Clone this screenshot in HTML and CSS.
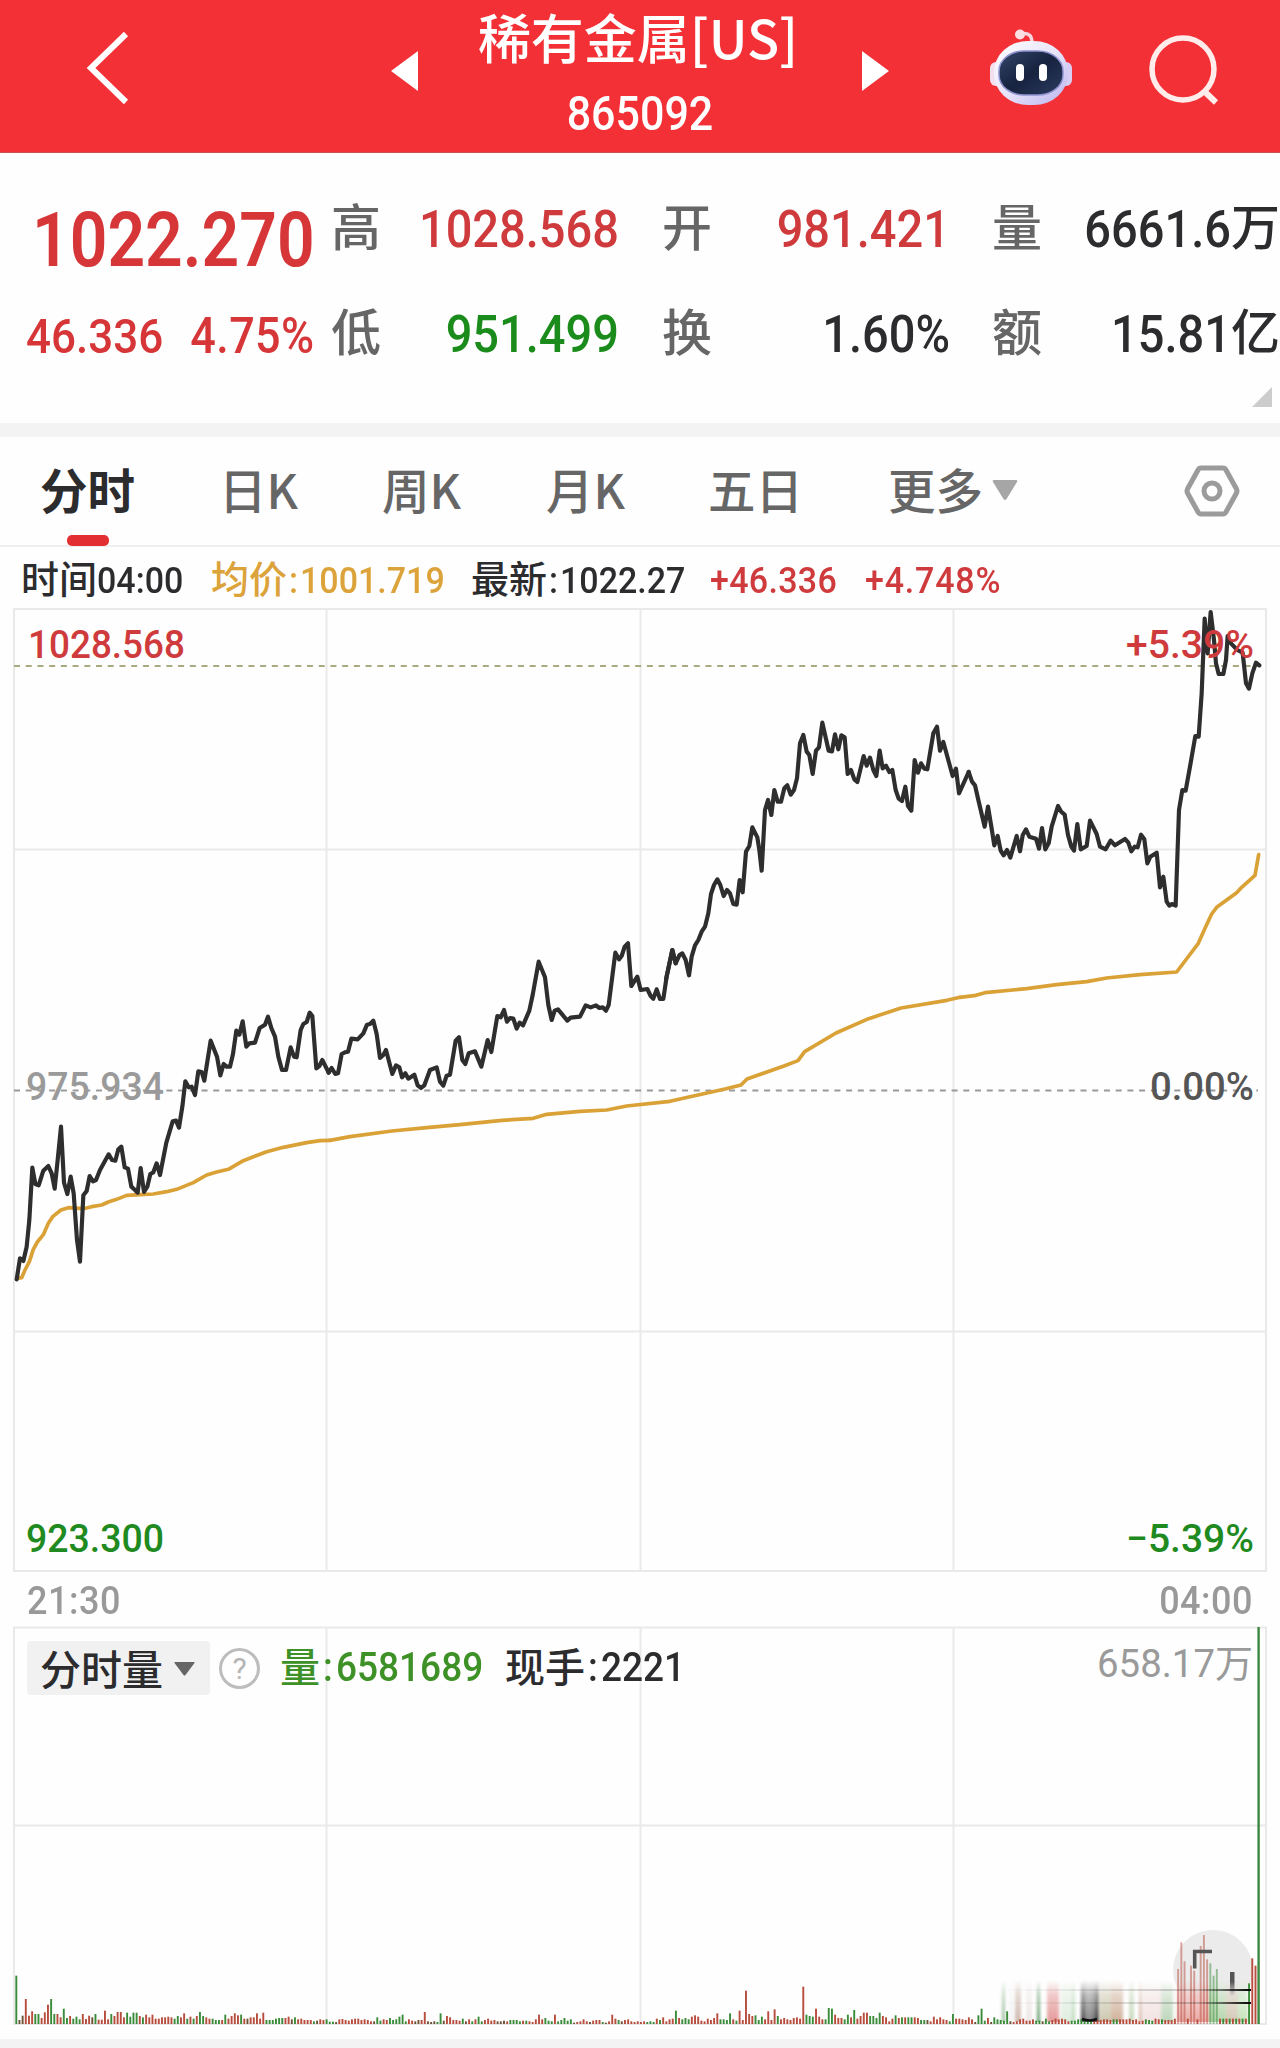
FILE: index.html
```html
<!DOCTYPE html>
<html lang="zh-CN">
<head>
<meta charset="utf-8">
<title>稀有金属[US] 865092</title>
<link rel="stylesheet" href="styles.css">
</head>
<body>
<header class="topbar">
  <svg class="back" viewBox="0 0 46 78"><path d="M41 5 6 39l35 34" fill="none" stroke="#fff" stroke-width="6"/></svg>
  <svg class="tri tri-left" viewBox="0 0 27 40"><path d="M27 0v40L0 20z" fill="#fff"/></svg>
  <div class="heading">
    <h1 class="name">稀有金属[US]</h1>
    <div class="code num">865092</div>
  </div>
  <svg class="tri tri-right" viewBox="0 0 27 40"><path d="M0 0v40L27 20z" fill="#fff"/></svg>
  <svg class="robot" viewBox="0 0 84 78">
    <defs>
      <linearGradient id="shell" x1="0" y1="0" x2="1" y2="1"><stop offset="0" stop-color="#fff"/><stop offset=".5" stop-color="#e8e4fa"/><stop offset="1" stop-color="#b9b4ee"/></linearGradient>
      <linearGradient id="face" x1="0" y1="0" x2="1" y2="1"><stop offset="0" stop-color="#34466b"/><stop offset=".5" stop-color="#17233f"/><stop offset="1" stop-color="#2b3b60"/></linearGradient>
    </defs>
    <path d="M31 5c9-2 12 2 12 9" fill="none" stroke="#f7d5dc" stroke-width="3.5"/>
    <circle cx="31" cy="5.500" r="5" fill="#fbdfe3"/>
    <rect x="1" y="33" width="14" height="24" rx="6" fill="#f3dfee"/>
    <rect x="69" y="33" width="14" height="24" rx="6" fill="#d8cdf2"/>
    <rect x="5" y="12" width="74" height="64" rx="34" ry="31" fill="url(#shell)"/>
    <rect x="10" y="22" width="64" height="44" rx="25" ry="20" fill="url(#face)" stroke="#8f93cf" stroke-width="1.500"/>
    <rect x="27" y="35" width="8" height="17" rx="4" fill="#fff"/>
    <rect x="50" y="35" width="8" height="17" rx="4" fill="#fff"/>
  </svg>
  <svg class="search" viewBox="0 0 72 72"><circle cx="34" cy="35" r="31" fill="none" stroke="#ffeceb" stroke-width="5.500"/><path d="M55 57l12 11.500" stroke="#ffeceb" stroke-width="6"/></svg>
</header>

<section class="quote">
  <div class="last">
    <div class="price num">1022.270</div>
    <div class="change"><span class="num">46.336</span><span class="num pct">4.75%</span></div>
  </div>
  <dl class="stats">
    <dt>高</dt><dd class="up"><span class="num">1028.568</span></dd>
    <dt>开</dt><dd class="up"><span class="num">981.421</span></dd>
    <dt>量</dt><dd><span class="num">6661.6</span><span class="unit">万</span></dd>
    <dt>低</dt><dd class="down"><span class="num">951.499</span></dd>
    <dt>换</dt><dd><span class="num">1.60%</span></dd>
    <dt>额</dt><dd><span class="num">15.81</span><span class="unit">亿</span></dd>
  </dl>
  <i class="corner"></i>
</section>

<nav class="tabs">
  <a class="tab active">分时</a>
  <a class="tab">日K</a>
  <a class="tab">周K</a>
  <a class="tab">月K</a>
  <a class="tab">五日</a>
  <a class="tab more">更多<svg viewBox="0 0 26 22"><path d="M2 1h22q2 0 1 2L14.500 20q-1.500 2-3 0L1 3Q0 1 2 1z" fill="#a6a6a6"/></svg></a>
  <svg class="settings" viewBox="0 0 56 54"><path d="M17 4h22q2 0 3 2l10.500 19q1 2 0 4L42 48q-1 2-3 2H17q-2 0-3-2L3.500 29q-1-2 0-4L14 6q1-2 3-2z" fill="none" stroke="#9b9b9b" stroke-width="5"/><circle cx="28" cy="27" r="8" fill="none" stroke="#9b9b9b" stroke-width="5"/></svg>
</nav>

<div class="info">
  <div class="item t">时间<span class="num">04:00</span></div>
  <div class="item avg">均价<span class="num"><i>:</i>1001.719</span></div>
  <div class="item">最新<span class="num"><i>:</i>1022.27</span></div>
  <div class="item up"><span class="num">+46.336</span></div>
  <div class="item up"><span class="num">+4.748%</span></div>
</div>

<svg class="chart" viewBox="0 606 1280 968" height="968">
  <g class="grid">
    <path d="M14 609H1266V1571H14zM326.500 609V1571M640.500 609V1571M953.500 609V1571M14 849.500H1266M14 1331.500H1266"/>
  </g>
  <path d="M14 666H1258" class="dash last-line"/>
  <path d="M14 1090.500H1258" class="dash mid-line"/>
  <g class="labels">
    <text x="26" y="1100" textLength="138" class="grey" lengthAdjust="spacingAndGlyphs">975.934</text>
    <text x="1150" y="1100" textLength="104" class="mid" lengthAdjust="spacingAndGlyphs">0.00%</text>
  </g>
  <g class="average">
    <path transform="translate(0 960) scale(.33333)" d="M50 955 65 953 75 930 88 905 100 868 112 846 130 824 145 790 158 770 183 750 205 743 250 746 275 740 305 735 325 726 350 718 380 706 420 704 460 702 500 695 530 688 580 668 620 645 650 636 685 628 730 602 800 575 850 562 920 548 960 542 990 541"/>
    <path transform="scale(.33333)" d="M990 3421 1050 3410 1176 3393 1280 3383 1380 3374 1506 3361 1600 3355 1640 3343 1740 3334 1820 3330 1880 3318 2010 3304 2040 3297 2175 3267 2223 3255 2241 3237 2352 3198 2394 3182 2414 3155 2508 3099 2606 3056 2703 3024 2841 3001 2880 2992"/>
    <path transform="translate(960 600) scale(.33333)" d="M0 1192 48 1186 75 1178 200 1166 290 1154 380 1145 440 1134 540 1124 650 1116 675 1083 715 1030 735 985 755 942 770 922 800 900 830 878 845 862 885 826 896 764"/>
  </g>
  <g class="price-line">
    <path transform="translate(0 960) scale(.33333)" d="M50 958 60 895 70 903 80 860 88 780 97 623 106 672 116 676 130 632 145 618 155 640 164 686 173 600 183 500 192 668 202 702 212 650 221 700 231 840 240 905 250 706 260 693 269 648 279 664 288 660 300 630 326 583 336 600 346 602 355 568 364 560 374 622 384 626 394 680 405 690 413 698 422 624 432 696 442 680 451 642 460 637 470 610 480 645 499 548 518 484 528 482 537 503 547 440 556 364 566 382 575 380 585 405 595 334 605 336 613 362 632 242 651 290 661 346 671 312 680 320 690 320 699 282 709 212 718 224 728 184 739 260 748 250 765 248 779 204 795 194 804 170 814 204 825 230 835 290 846 330 858 330 872 262 882 290 890 292 902 210 910 192 920 186 929 158 937 168 949 325 958 318 967 300 986 338"/>
    <path transform="translate(320 900) scale(.33333)" d="M26 518 35 504 46 522 54 520 65 462 75 457 84 455 94 416 113 418 130 400 141 374 150 372 160 362 170 402 180 474 190 465 198 450 217 522 228 496 238 502 246 532 256 520 265 536 283 524 293 556 303 564 313 556 330 510 350 502 360 545 370 557 380 527 390 524 407 422 417 412 427 480 436 492 446 460 465 454 484 500 503 420 514 456 532 348 542 352 552 330 561 365 570 354 580 356 590 386 599 368 609 376 628 332 638 285 656 185 675 232 685 315 695 360 704 332 714 328 742 362 752 353 780 350 797 316 812 322 828 316 838 324 848 322 858 332 866 315 886 158 897 178 905 168 914 140 924 130 934 258 952 230 962 270 982 267 992 288 1000 296 1010 268 1020 297 1030 297 1040 230 1057 150 1067 190"/>
    <path transform="translate(640 700) scale(.33333)" d="M78 838 97 750 107 790 118 766 127 760 137 780 147 826 155 770 165 736 175 720 185 695 195 680 205 640 213 582 222 555 232 538 241 555 251 588 261 570 270 580 280 612 290 614 299 540 308 577 318 455 328 438 337 382 352 412 358 450 365 512 375 330 384 300 394 345 403 270 413 305 423 305 433 265 442 256 452 284 462 270 471 235 480 130 490 105 500 155 508 165 518 222 528 152 537 142 547 68 566 152 576 154 585 103 595 148 604 106 614 112 623 222 633 210 643 238 652 246 671 168 680 197 690 173 700 210 709 228 719 152 728 205 738 197 748 216 757 210 767 270 776 296 786 303 796 260 804 318 814 332 824 180 834 218 843 190 853 206 862 208 880 100 891 80 900 152 910 126 938 228 948 206 957 280 986 216"/>
    <path transform="translate(960 600) scale(.33333)" d="M26 516 36 545 45 556 55 600 74 680 84 620 94 680 103 736 113 708 122 752 131 766 141 750 151 773 170 708 180 754 188 706 198 688 208 710 228 716 237 746 246 684 256 748 266 730 275 680 294 618 304 636 314 644 324 705 334 740 342 752 352 672 362 748 380 738 390 662 410 702 420 740 437 748 452 722 465 736 495 717 505 728 514 754 524 740 533 742 543 704 553 718 562 790 571 770 590 758 600 862 610 830 620 905 628 917 636 912 647 917 657 630 667 570 677 572 690 500 706 408 716 410 725 280 734 56 743 160 752 36 762 120 768 190 776 222 790 222 798 180 803 108 813 130 832 150 848 158 858 250 867 266 877 220 888 188 898 196"/>
  </g>
  <g class="labels">
    <text x="28" y="657.500" textLength="157" class="red" lengthAdjust="spacingAndGlyphs">1028.568</text>
    <text x="1126" y="657.500" textLength="128" class="red" lengthAdjust="spacingAndGlyphs">+5.39%</text>
    <text x="26" y="1552" textLength="138" class="green" lengthAdjust="spacingAndGlyphs">923.300</text>
    <text x="1126" y="1552" textLength="128" class="green" lengthAdjust="spacingAndGlyphs">−5.39%</text>
  </g>
</svg>

<div class="axis"><span class="num">21:30</span><span class="num">04:00</span></div>

<section class="volume">
  <svg class="chart" viewBox="0 1624 1280 415" height="415">
    <defs>
      <linearGradient id="down" x1="0" y1="0" x2="0" y2="1"><stop offset="0" stop-color="#fff" stop-opacity="0"/><stop offset=".35" stop-color="#fff" stop-opacity=".5"/><stop offset="1" stop-color="#fff" stop-opacity="1"/></linearGradient>
      <linearGradient id="across"><stop offset="0" stop-color="#000" stop-opacity="0"/><stop offset=".8" stop-color="#000" stop-opacity=".2"/><stop offset="1" stop-color="#000"/></linearGradient>
      <linearGradient id="barrel"><stop offset="0" stop-color="#222"/><stop offset=".35" stop-color="#888"/><stop offset=".65" stop-color="#777"/><stop offset="1" stop-color="#111"/></linearGradient>
      <mask id="fade" maskUnits="userSpaceOnUse" x="960" y="1860" width="320" height="180"><rect x="960" y="1980" width="320" height="44" fill="url(#down)"/></mask>
      <filter id="soft"><feGaussianBlur stdDeviation="1.500 0"/></filter>
      <linearGradient id="tail" x1="0" y1="0" x2="0" y2="1"><stop offset=".4" stop-color="#555"/><stop offset="1" stop-color="#555" stop-opacity="0"/></linearGradient>
      <linearGradient id="disc" gradientUnits="userSpaceOnUse" x1="0" y1="1980" x2="0" y2="2006"><stop offset="0" stop-color="#ebebeb"/><stop offset="1" stop-color="#ebebeb" stop-opacity="0"/></linearGradient>
    </defs>
    <g class="grid"><path d="M14 1627.500H1266V2024H14zM326.500 1627V2024M640.500 1627V2024M953.500 1627V2024M14 1825.500H1266"/></g>
    <circle cx="1213" cy="1970" r="40" fill="url(#disc)"/>
    <g mask="url(#fade)"><g id="streaks" filter="url(#soft)"></g></g>
    <g id="bars"></g>
    <path d="M1194.700 1968.500V1951.500H1212" fill="none" stroke="#555" stroke-width="3.600"/>
    <rect x="1230" y="1972" width="4.500" height="24" fill="url(#tail)"/>
    <rect x="1000" y="1989" width="251" height="2" fill="url(#across)"/>
    <rect x="1000" y="2002" width="251" height="2" fill="url(#across)"/>
    <path d="M1082 2019q8 3 15 0" fill="none" stroke="#111" stroke-width="2.500"/>
    <g class="labels"><text x="1097" y="1677" textLength="118" class="grey thin" lengthAdjust="spacingAndGlyphs">658.17</text><text x="1215" y="1677" class="cjk">万</text></g>
  </svg>
  <div class="legend">
    <div class="picker">分时量<svg viewBox="0 0 21 14"><path d="M1 0h19q1 0 .5 1L11.500 13q-1 1-2 0L.5 1Q0 0 1 0z" fill="#666"/></svg></div>
    <span class="help">?</span>
    <div class="item vol">量<span class="num"><i>:</i>6581689</span></div>
    <div class="item">现手<span class="num"><i>:</i>2221</span></div>
  </div>
</section>
<footer class="foot"></footer>
<script src="volume.js"></script>
</body>
</html>
```
FILE: styles.css
```css
* { box-sizing: border-box; }
body {
  margin: 0;
  width: 1280px;
  height: 2048px;
  overflow: hidden;
  background: #fefefe;
  color: #2c2c2e;
  font-family: "Noto Sans CJK SC", sans-serif;
  font-weight: 500;
}
svg { display: block; }
.num {
  display: inline-block;
  font-family: Roboto, "Noto Sans CJK SC", sans-serif;
  font-weight: 500;
  transform: scaleY(1.09);
}
.up { color: #cf3a3c; }
.down { color: #1b8c1b; }

.topbar {
  display: flex;
  align-items: flex-start;
  height: 153px;
  background: #f23036;
  border-bottom: 1px solid #c9504f;
  color: #fff;
}
.back { width: 46px; height: 78px; margin: 29px 0 0 85px; }
.tri { width: 27px; height: 40px; margin-top: 51px; }
.tri-left { margin-left: 260px; }
.heading { width: 444px; text-align: center; }
.name { margin: 0; font-size: 53px; font-weight: 500; line-height: 72px; height: 74px; white-space: nowrap; margin-right: 4px; }
.code { font-size: 43px; line-height: 50px; margin-top: 14px; transform: scaleY(1.14); }
.robot { width: 84px; height: 78px; margin: 29px 0 0 100px; }
.search { width: 72px; height: 72px; margin: 34px 0 0 76px; }

.quote { position: relative; display: flex; height: 270px; }
.last { width: 332px; color: #d63638; }
.price { display: block; font-size: 66px; font-weight: 600; line-height: 80px; margin: 48px 0 0 32px; transform: scaleY(1.14); }
.change { display: flex; gap: 27px; font-size: 44px; line-height: 50px; margin: 31px 0 0 26px; }
.pct { font-size: 45px; letter-spacing: .4px; }
.stats {
  display: grid;
  grid-template-columns: 50px 237px 44px 50px 237px 43px 50px 237px;
  grid-template-rows: 60px 60px;
  row-gap: 45px;
  margin: 45px 0 0;
}
.stats dt { grid-column: 1; color: #666; font-size: 50px; line-height: 52px; margin-left: -1px; }
.stats dt:nth-of-type(3n+2) { grid-column: 4; }
.stats dt:nth-of-type(3n) { grid-column: 7; }
.stats dd { display: flex; justify-content: flex-end; margin: 0; font-size: 47px; line-height: 62px; white-space: nowrap; }
.unit { font-size: 49px; line-height: 52px; }
.corner { position: absolute; right: 8px; bottom: 16px; width: 20px; height: 20px; background: #ccc; clip-path: polygon(100% 0, 100% 100%, 0 100%); }

.tabs {
  display: flex;
  height: 124px;
  border-top: 14px solid #f3f3f3;
  border-bottom: 2px solid #efefef;
  padding-left: 40px;
}
.tab { position: relative; width: 157px; padding-top: 17px; font-size: 47.5px; line-height: 69px; color: #666; white-space: nowrap; }
.tab:nth-child(1) { width: 179px; font-weight: 700; color: #2c2c2e; }
.tab:nth-child(2) { width: 163px; }
.tab:nth-child(3) { width: 164px; }
.tab:nth-child(4) { width: 162px; }
.tab:nth-child(5) { width: 180px; }
.tab.active::after { content: ""; position: absolute; left: 27px; bottom: -1px; width: 42px; height: 11px; border-radius: 5px; background: #e22f31; }
.more { display: flex; width: 296px; }
.more svg { width: 26px; height: 22px; margin: 25px 0 0 9px; }
.settings { width: 56px; height: 54px; margin-top: 27px; }

.info { display: flex; height: 59px; padding: 5px 0 0 21px; }
.item { display: flex; font-size: 38px; line-height: 50px; white-space: nowrap; }
.item .num { font-size: 34px; line-height: 56px; }
.item i { font-style: normal; display: inline-block; width: 13px; text-align: center; }
.info .item { width: 239px; }
.info .item:nth-child(1) { width: 190px; }
.info .item:nth-child(2) { width: 260px; }
.info .item:nth-child(4) { width: 155px; }
.info .up { letter-spacing: .3px; }
.info .up:last-child { letter-spacing: .8px; }
.info .avg { color: #dba339; }

.grid path { fill: none; stroke: #e9e9e9; stroke-width: 2; }
.dash { stroke-width: 2; stroke-dasharray: 6 5.72; }
.last-line { stroke: #a9aa80; }
.mid-line { stroke: #999; }
.price-line path, .average path { fill: none; stroke-width: 12.5; stroke-linejoin: round; stroke-linecap: round; }
.price-line path { stroke: #2e2e2e; }
.average path { stroke: #d9a136; stroke-width: 11; }
.labels text { font-family: Roboto, sans-serif; font-weight: 500; font-size: 39px; }
.labels .red { fill: #cf3a3c; }
.labels .green { fill: #1f8a20; }
.labels .grey { fill: #9a9a9a; }
.labels .mid { fill: #555; }
.labels .thin { font-weight: 400; }
.labels .cjk { font-family: "Noto Sans CJK SC", sans-serif; font-weight: 400; font-size: 38px; fill: #999; }

.axis { display: flex; justify-content: space-between; height: 50px; padding: 0 27px; font-size: 36px; line-height: 55px; color: #999; }
.axis .num { letter-spacing: .5px; }

.volume { position: relative; height: 415px; }
.legend { position: absolute; left: 27px; top: 17px; display: flex; align-items: center; height: 54px; }
.picker { display: flex; align-items: center; width: 183px; height: 54px; padding: 0 0 3px 13px; border-radius: 4px; background: #f1f1f1; font-size: 41px; line-height: 50px; white-space: nowrap; }
.picker svg { width: 21px; height: 14px; margin: 4px 0 0 11px; }
.help { width: 41px; height: 41px; margin: 0 20px 0 9px; border: 3px solid #bdbdbd; border-radius: 50%; color: #b5b5b5; font: 400 30px/35px Roboto, sans-serif; text-align: center; }
.legend .item { font-size: 40px; line-height: 48px; }
.legend .item .num { font-size: 37px; line-height: 54px; }
.legend .item i { width: 16px; }
.legend .vol { width: 225px; color: #3d9126; }
.foot { height: 9px; background: #f3f3f3; }
```
FILE: volume.js
```js
// One entry per bar: height in thirds of a pixel, optional r/g tint.
// Each run holds its first and last bar centre on the time axis.
const runs = [
  [16.3, 497.6, `145g 12 25 75r 25r 38r 30g 30g 18r 35r 58r 75g 30g 30r 20r 46g 18g 24r 16g 22g 14g 30r 15r 25r 20 30g 13r 13r 40r 14r 30g 24r 36r 36r 20r 34g 22g 34g 34g 24r 20g 28r 20r 28r 16r 16r 20r 20r 22r 20r 16g 24g 20r 32r 16g 22r 16g 24r 36g 24g 20r 16r 16g 12g 12g 12r 28g 16r 24r 32r 26r 28g 16r 16 20r 20r 32r 16r 34r 12g 12g 12g 16g 18g 18g 18r 22r 14 20g 14r 16r 12r 12r 12r 8g 10 14r 12r 14g 7g 7g 6 14r 15r 12r 10r 14r 16r 16r 12r 14r 12r 8r 8 20g 10g 14r 12r 18g 12g 14g 22g 28g 8g 14r 10r 8 12 12r 36r 8 6 8 6g 32g 10 24r 20r 12r 12r 10r 16g 8 14r 8g 14r 22g 8g 12r 16r 10r 12r 8`],
  [500.8, 997.5, `8 10 8r 12g 12g 12g 8g 10r 10g 8r 6r 14r 28r 14r 18g 10g 8g 28r 8g 12g 18g 10g 14g 4 6r 8r 14r 8r 6 10r 12r 12r 6g 4 8r 28r 16r 12g 8 12r 14r 8r 6r 8r 6r 8r 6g 8g 6g 16r 12g 20r 8r 14r 16r 40g 18r 14g 18g 14g 22r 26r 22r 10r 8r 16r 12r 18r 32r 14g 14g 12g 32g 14r 10g 40r 12r 100r 30r 24r 26g 12g 22g 14r 38r 12r 44r 24g 14r 18r 14r 12r 18r 20r 16r 112r 28g 24g 22g 46r 22r 14r 14g 48g 46g 28r 18r 18r 14g 28g 20r 42g 16r 24r 34r 34r 24g 24g 18g 34g 24r 20r 8r 16r 26g 18r 20g 20r 20g 20g 20r 18r 12g 12g 12 8r 22r 14r 20r 14r 12r 8g 30g 16r 16r 14r 12r 20r 14r 6 26g 46g 10g 18r 6 20g 14g`],
  [1000.7, 1255.5, `12g 10g 38g 8 6r 8r 14r 16r 10r 10r 14r 10g 10g 8 16g 8g 12r 16r 14r 16r 14r 8r 10g 10g 14g 14g 12g 10g 8g 12r 12r 12r 14r 14r 12r 14g 14g 14r 14r 14r 16r 12r 14r 8r 10r 14g 12g 10g 16r 14r 14g 12r 12r 12r 16r 165r 245r 188r 16r 175r 160r 14r 234r 267r 194r 182g 145g 165g 16r 16g 16r 16g 16r 16g 16r 16g 16r 122g 197r 175r`]
];

const NS = "http://www.w3.org/2000/svg";
const colors = { r: "#b84c3d", g: "#3a8c3a", n: "#6c5236" };
function rect(parent, x, y, w, h, fill, opacity) {
  const el = document.createElementNS(NS, "rect");
  Object.entries({ x, y, width: w, height: h, fill, opacity }).forEach(([k, v]) => el.setAttribute(k, v));
  parent.append(el);
}

const bars = document.getElementById("bars");
runs.forEach(([from, to, data]) => {
  const list = data.split(" ");
  const step = (to - from) / (list.length - 1);
  list.forEach((d, i) => {
    const h = parseInt(d) / 3, t = d.slice(-1);
    const x = from + i * step;
    const tall = h > 38 && x > 1170 && x < 1225;
    rect(bars, x - 0.95, 2024 - h, 1.9, h, colors[t] || colors.n, tall ? 0.5 : 1);
  });
});
rect(bars, 1257.4, 1627, 2.4, 397, "#3c8740", 1);

// Translucent columns behind the floating button: x, width, color, opacity.
const streaks = document.getElementById("streaks");
[[1002, 3, "#4f8a4f", .6], [1009, 4, "#ddd", .4], [1015, 6, "#b79585", .7], [1026, 6, "#dcd0cc", .5],
 [1037, 3, "#2f7a3a", .8], [1047, 12, "#e08a8a", .9], [1061, 15, "#cfe5cf", .7], [1072, 2, "#9ac79a", .7],
 [1081, 18, "url(#barrel)", 1], [1100, 11, "#bdb795", .8], [1111, 12, "#caa58c", .9], [1129, 5, "#b5cda5", .8],
 [1139, 3, "#c9a18a", .8], [1143, 18, "#eed4d4", .7], [1161, 12, "#a9caa6", .8], [1177, 14, "#e6a09a", .9],
 [1191, 18, "#e58f88", .8], [1209, 17, "#a8cf9f", .9], [1226, 12, "#c7b79f", .8], [1238, 10, "#b3dba8", .8]
].forEach(([x, w, c, o]) => rect(streaks, x, 1980, w, 42, c, o));
```
